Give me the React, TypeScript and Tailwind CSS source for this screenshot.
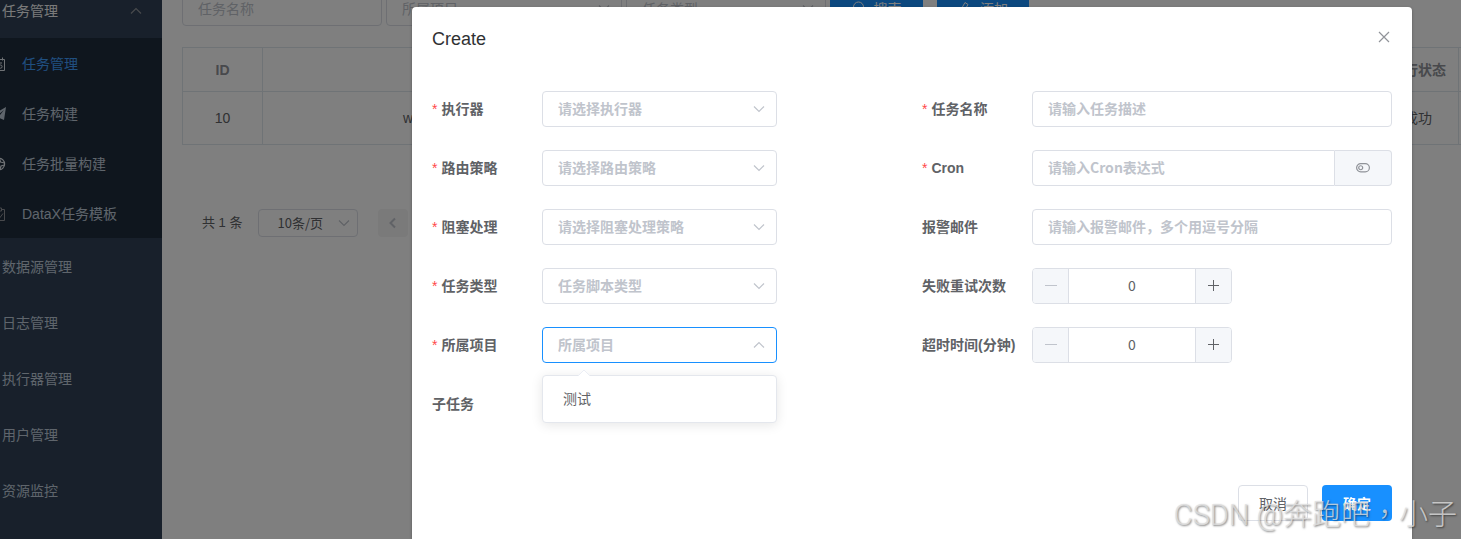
import React, { useState } from 'react';

interface FieldProps {
    id: string;
    label: string;
    required?: boolean;
    children?: React.ReactNode;
}

interface SelectBoxProps {
    id: string;
    placeholder: string;
    open?: boolean;
    options?: string[];
}

const ARIAL = "font-['Liberation_Sans','Noto_Sans_CJK_SC',sans-serif]";
const CJK = "font-['Noto_Sans_CJK_SC',sans-serif]";

const Chevron: React.FC<{ className?: string; up?: boolean }> = ({ className = '', up }) => (
    <svg viewBox="0 0 12 12" fill="none" stroke="currentColor" strokeWidth="1.2" className={className} aria-hidden="true">
        <path d={up ? 'M1 8.5 6 3.5l5 5' : 'M1 3.5l5 5 5-5'} />
    </svg>
);

const CalendarIcon = () => (
    <svg viewBox="0 0 14 14" fill="none" stroke="currentColor" className="h-3.5 w-3.5">
        <path d="M1 2.5h11.500v11H1zM4 .5v3M10.500 .5v3" />
        <path d="M7 6h3M7.500 6v2h1a1.500 1.500 0 0 1 0 3.200H7" />
    </svg>
);

const PlaneIcon = () => (
    <svg viewBox="0 0 14 14" fill="currentColor" className="h-3.5 w-3.5">
        <path d="M14 0 0 8l4 1.500L12 3 6 10.500 12 13zM5 11v3l2-2z" />
    </svg>
);

const GlobeIcon = () => (
    <svg viewBox="0 0 14 14" fill="none" stroke="currentColor" strokeWidth="1.2" className="h-3.5 w-3.5">
        <circle cx="6.800" cy="7" r="5.800" />
        <path d="M7.500 1.500 8.500 5l4 1M8 12.500l1-3.500 3.500-1M2 6l3 2" />
    </svg>
);

const ClipboardIcon = () => (
    <svg viewBox="0 0 14 14" fill="none" stroke="currentColor" className="h-3.5 w-3.5">
        <path d="M4 2.5H1.500v11h11v-11H10M4.500 1h5v3h-5zM6 8.500l2 2 3-4" />
    </svg>
);

const subMenu = [
    { text: '任务管理', icon: <CalendarIcon />, iconColor: 'text-[#dfe4ea]', active: true },
    { text: '任务构建', icon: <PlaneIcon />, iconColor: 'text-[#bfcbd9]' },
    { text: '任务批量构建', icon: <GlobeIcon />, iconColor: 'text-[#dfe4ea]' },
    { text: 'DataX任务模板', icon: <ClipboardIcon />, iconColor: 'text-[#909399]' },
];

const mainMenu = ['数据源管理', '日志管理', '执行器管理', '用户管理', '资源监控'];

const Sidebar = () => (
    <nav className="w-[162px] shrink-0 overflow-hidden bg-[#304156] text-sm text-[#bfcbd9]">
        <div className="-mt-[18px] flex h-14 items-center justify-between pl-0.5 pr-5 pt-0.5 text-[#f4f4f5]">
            <span>任务管理</span>
            <Chevron up className="h-3 w-3 text-[#909399]" />
        </div>
        <ul className="bg-[#1f2d3d]">
            {subMenu.map((item) => (
                <li key={item.text}>
                    <a href="#" className={`-ml-2 flex h-[50px] items-center gap-4 pt-0.5 ${item.active ? 'text-[#409eff]' : ''}`}>
                        <span className={item.iconColor}>{item.icon}</span>
                        <span>{item.text}</span>
                    </a>
                </li>
            ))}
        </ul>
        <ul>
            {mainMenu.map((text) => (
                <li key={text}>
                    <a href="#" className="flex h-14 items-center pl-0.5 pt-0.5">{text}</a>
                </li>
            ))}
        </ul>
    </nav>
);

const FilterSelect: React.FC<{ text: string; className: string }> = ({ text, className }) => (
    <div className={`relative ${className}`}>
        <select aria-label={text} className="h-9 w-full appearance-none rounded border border-[#dcdfe6] bg-white px-[15px] text-[#c0c4cc]">
            <option>{text}</option>
        </select>
        <Chevron className="absolute right-3 top-3 h-3 w-3 text-[#c0c4cc]" />
    </div>
);

const TaskList = () => (
    <main className="min-w-0 flex-1 overflow-hidden bg-white pl-5 text-sm">
        <div className={`-mt-2.5 flex gap-1 ${CJK}`}>
            <input
                aria-label="任务名称"
                placeholder="任务名称"
                className="h-9 w-[200px] rounded border border-[#dcdfe6] px-[15px] placeholder:text-[#c0c4cc]"
            />
            <FilterSelect text="所属项目" className="w-[236px]" />
            <FilterSelect text="任务类型" className="w-[200px]" />
            <button className="flex h-9 w-[93px] items-center justify-center gap-2 rounded bg-[#1890ff] text-white">
                <svg viewBox="0 0 14 14" fill="none" stroke="currentColor" className="h-3.5 w-3.5">
                    <circle cx="6.500" cy="6" r="5" />
                    <path d="m10 10 3.500 3.500" />
                </svg>
                搜索
            </button>
            <button className="ml-2.5 flex h-9 w-[92px] items-center justify-center gap-2 rounded bg-[#1890ff] text-white">
                <svg viewBox="0 0 14 14" fill="none" stroke="currentColor" className="h-3.5 w-3.5">
                    <path d="M3 8.500 7 1.500l3 2-4 7-3 1zM1 13.500h12" />
                </svg>
                添加
            </button>
        </div>

        <table className="mt-[21px] w-full table-fixed border-collapse text-center text-[#606266]">
            <thead>
                <tr className="h-11 text-[#909399]">
                    <th className="w-20 border border-[#dfe6ec]">ID</th>
                    <th className="border border-[#dfe6ec]"></th>
                    <th className="w-20 whitespace-nowrap border border-[#dfe6ec]">运行状态</th>
                    <th className="w-[3px] border-y border-[#dfe6ec]"></th>
                </tr>
            </thead>
            <tbody>
                <tr className="h-[53px]">
                    <td className="border border-[#dfe6ec]">10</td>
                    <td className="border border-[#dfe6ec] pl-[140px] text-left">w</td>
                    <td className="border border-[#dfe6ec]">成功</td>
                    <td className="border-y border-[#dfe6ec]"></td>
                </tr>
            </tbody>
        </table>

        <div className="mt-16 flex items-center pl-5 text-[13px] text-[#606266]">
            <span>共 1 条</span>
            <div className={`relative ml-4 w-[100px] ${CJK}`}>
                <select aria-label="每页条数" className="h-7 w-full appearance-none rounded-sm border border-[#dcdfe6] bg-white pl-[18px]">
                    <option>10条/页</option>
                </select>
                <Chevron className="absolute right-2 top-2 h-3 w-3 text-[#c0c4cc]" />
            </div>
            <button aria-label="上一页" className="ml-5 flex h-7 w-[30px] items-center justify-center rounded-sm bg-[#f4f4f5] text-[#c0c4cc]">
                <svg viewBox="0 0 12 12" fill="none" stroke="currentColor" strokeWidth="2" className="h-3 w-3">
                    <path d="M8 1.500 3.500 6 8 10.500" />
                </svg>
            </button>
        </div>
    </main>
);

const Field: React.FC<FieldProps> = ({ id, label, required, children }) => (
    <div className="flex h-9 items-center">
        <label htmlFor={id} className="w-[110px] shrink-0 whitespace-nowrap font-bold text-[#606266]">
            {required && <span className="mr-1 font-normal text-[#ff4949]">*</span>}
            {label}
        </label>
        {children}
    </div>
);

const SelectBox: React.FC<SelectBoxProps> = ({ id, placeholder, open, options = [] }) => (
    <div className={`relative w-[235px] ${CJK}`}>
        <select
            id={id}
            className={`h-9 w-full appearance-none rounded border bg-white px-[15px] pb-0.5 font-bold text-[#c0c4cc] outline-none ${open ? 'border-[#1890ff]' : 'border-[#dcdfe6]'}`}
        >
            <option>{placeholder}</option>
        </select>
        <Chevron up={open} className="pointer-events-none absolute right-3 top-3 h-3 w-3 text-[#c0c4cc]" />
        {open && (
            <ul className="absolute left-0 top-12 z-10 w-full rounded border border-[#e4e7ed] bg-white py-1.5 text-[#606266] shadow-[0_2px_12px_rgba(0,0,0,0.1)]">
                <svg viewBox="0 0 12 7" className="absolute -top-1.5 left-[35px] h-[7px] w-3">
                    <path d="M0 6 6 0l6 6" fill="#fff" stroke="#ebeef5" />
                    <path d="M1 6h10v1H1z" fill="#fff" />
                </svg>
                {options.map((option) => (
                    <li key={option} className="flex h-[34px] items-center px-5 pb-0.5">{option}</li>
                ))}
            </ul>
        )}
    </div>
);

const NumberBox: React.FC<{ id: string }> = ({ id }) => {
    const [value, setValue] = useState(0);

    return (
        <div className="flex h-9 w-[200px] overflow-hidden rounded border border-[#dcdfe6]">
            <button
                type="button"
                aria-label="减少"
                disabled={value === 0}
                onClick={() => setValue(value - 1)}
                className="flex w-9 shrink-0 items-center justify-center border-r border-[#dcdfe6] bg-[#f5f7fa] text-[#c0c4cc]"
            >
                <svg viewBox="0 0 12 12" stroke="currentColor" className="h-3 w-3"><path d="M0 5.500h12" /></svg>
            </button>
            <input
                id={id}
                value={value}
                onChange={(e) => setValue(Number(e.target.value) || 0)}
                className={`min-w-0 flex-1 pb-0.5 text-center text-[#606266] outline-none ${CJK}`}
            />
            <button
                type="button"
                aria-label="增加"
                onClick={() => setValue(value + 1)}
                className="flex w-9 shrink-0 items-center justify-center border-l border-[#dcdfe6] bg-[#f5f7fa] text-[#606266]"
            >
                <svg viewBox="0 0 12 12" stroke="currentColor" className="h-3 w-3"><path d="M0 5.500h11M5.500 0v11" /></svg>
            </button>
        </div>
    );
};

const inputClass =
    'h-9 min-w-0 flex-1 border border-[#dcdfe6] bg-white px-[15px] pb-0.5 font-bold text-[#606266] outline-none placeholder:text-[#c0c4cc]';

const CreateDialog = () => (
    <div role="dialog" aria-label="Create" className="mt-[7px] w-[1000px] self-stretch rounded-t-sm bg-white px-5 text-sm shadow-[0_1px_3px_rgba(0,0,0,0.3)]">
        <div className="flex h-16 items-center justify-between">
            <h2 className="text-lg text-[#303133]">Create</h2>
            <button aria-label="关闭" className="mr-0.5 pb-1 text-[#909399]">
                <svg viewBox="0 0 12 12" fill="none" stroke="currentColor" strokeWidth="1.2" className="h-3 w-3">
                    <path d="m1 1 10 10M11 1 1 11" />
                </svg>
            </button>
        </div>

        <form className="mt-5 grid grid-cols-2 gap-x-5">
            <div className="flex flex-col gap-[23px]">
                <Field id="executor" label="执行器" required>
                    <SelectBox id="executor" placeholder="请选择执行器" />
                </Field>
                <Field id="route" label="路由策略" required>
                    <SelectBox id="route" placeholder="请选择路由策略" />
                </Field>
                <Field id="block" label="阻塞处理" required>
                    <SelectBox id="block" placeholder="请选择阻塞处理策略" />
                </Field>
                <Field id="type" label="任务类型" required>
                    <SelectBox id="type" placeholder="任务脚本类型" />
                </Field>
                <Field id="project" label="所属项目" required>
                    <SelectBox id="project" placeholder="所属项目" open options={['测试']} />
                </Field>
                <Field id="child" label="子任务" />
            </div>
            <div className="flex flex-col gap-[23px]">
                <Field id="name" label="任务名称" required>
                    <input id="name" placeholder="请输入任务描述" className={`${inputClass} ${CJK} rounded`} />
                </Field>
                <Field id="cron" label="Cron" required>
                    <input id="cron" placeholder="请输入Cron表达式" className={`${inputClass} ${CJK} rounded-l`} />
                    <button
                        type="button"
                        aria-label="Cron表达式"
                        className="flex h-9 w-[57px] items-center justify-center rounded-r border border-l-0 border-[#dcdfe6] bg-[#f5f7fa] text-[#909399]"
                    >
                        <svg viewBox="0 0 14 10" fill="none" stroke="currentColor" strokeWidth="1.2" className="h-2.5 w-3.5">
                            <rect x=".6" y=".6" width="12.800" height="8.300" rx="4.150" />
                            <circle cx="4.700" cy="4.750" r="2" />
                        </svg>
                    </button>
                </Field>
                <Field id="email" label="报警邮件">
                    <input id="email" placeholder="请输入报警邮件，多个用逗号分隔" className={`${inputClass} ${CJK} rounded`} />
                </Field>
                <Field id="retry" label="失败重试次数">
                    <NumberBox id="retry" />
                </Field>
                <Field id="timeout" label="超时时间(分钟)">
                    <NumberBox id="timeout" />
                </Field>
            </div>
        </form>

        <div className={`mt-[63px] flex justify-end gap-3.5 ${CJK}`}>
            <button className="h-9 w-[70px] rounded border border-[#dcdfe6] bg-white text-[#606266]">取消</button>
            <button className="h-9 w-[70px] rounded bg-[#1890ff] font-bold text-white">确定</button>
        </div>
    </div>
);

const App = () => (
    <div className={`relative flex h-screen overflow-hidden ${ARIAL}`}>
        <Sidebar />
        <TaskList />
        <div className="absolute inset-0 flex justify-end bg-black/50 pr-[49px]">
            <CreateDialog />
        </div>
        <div className="pointer-events-none absolute bottom-1 right-1 whitespace-nowrap font-['Roboto','Noto_Sans_CJK_TC',sans-serif] text-[29px] font-light leading-10 text-[#e0e0e0]/80 [text-shadow:1px_1px_2px_rgba(0,0,0,0.5)]">
            CSDN @奔跑吧，小子
        </div>
    </div>
);

export default App;
